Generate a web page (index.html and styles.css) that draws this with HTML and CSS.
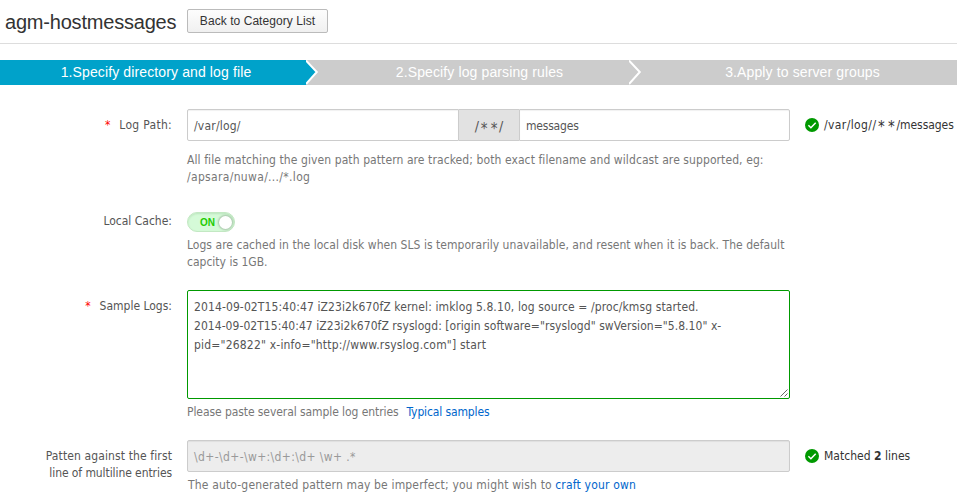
FILE: index.html
```html
<!DOCTYPE html>
<html lang="en">
<head>
<meta charset="utf-8">
<title>agm-hostmessages</title>
<link rel="stylesheet" href="styles.css">
</head>
<body>
<header class="header">
  <h1 class="title">agm-hostmessages</h1>
  <button class="back" type="button">Back to Category List</button>
</header>

<ol class="steps">
  <li class="step step-1 active">1.Specify directory and log file
    <svg class="chevron" width="13" height="25" viewBox="0 0 13 25"><path class="chevron-fill" d="M0 0 11 12 0 25Z"/><path class="chevron-line" d="M0 .5 10.8 12 0 24"/></svg>
  </li>
  <li class="step step-2">2.Specify log parsing rules
    <svg class="chevron" width="13" height="25" viewBox="0 0 13 25"><path class="chevron-line" d="M0 .5 10.8 12 0 24"/></svg>
  </li>
  <li class="step step-3">3.Apply to server groups</li>
</ol>

<main class="form">
  <section class="row row-path">
    <div class="label"><span class="required">*</span><span class="t-logpath">Log Path:</span></div>
    <div class="field">
      <div class="input-group">
        <div class="input input-dir">/var/log/</div>
        <div class="addon">/<span class="star">*</span><span class="star">*</span>/</div>
        <div class="input input-file">messages</div>
      </div>
      <p class="help help-path"><span class="t-help1">All file matching the given path pattern are tracked; both exact filename and wildcast are supported, eg:</span><br><span class="t-help2">/apsara/nuwa/.../*.log</span></p>
    </div>
    <div class="status">
      <svg class="tick" width="14" height="14" viewBox="0 0 14 14"><circle cx="7" cy="7" r="7"/><path d="M3.4 7.3 5.9 9.7 10.7 4.7"/></svg>
      <span class="t-path"><span class="t-root">/var/log//</span><span class="star">*</span><span class="star">*</span>/messages</span>
    </div>
  </section>

  <section class="row row-cache">
    <div class="label">Local Cache:</div>
    <div class="field">
      <div class="switch"><span class="switch-text">ON</span><span class="knob"></span></div>
      <p class="help help-cache"><span class="t-help3">Logs are cached in the local disk when SLS is temporarily unavailable, and resent when it is back. The default</span><br>capcity is 1GB.</p>
    </div>
  </section>

  <section class="row row-sample">
    <div class="label"><span class="required">*</span>Sample Logs:</div>
    <div class="field">
      <div class="textarea">
        <div class="t-log1">2014-09-02T15:40:47 iZ23i2k670fZ kernel: imklog 5.8.10, log source = /proc/kmsg started.</div>
        <div class="t-log2">2014-09-02T15:40:47 iZ23i2k670fZ rsyslogd: [origin software="rsyslogd" swVersion="5.8.10" x-</div>
        <div class="t-log3">pid="26822" x-info="http://www.rsyslog.com"] start</div>
        <svg class="grip" width="8" height="8" viewBox="0 0 8 8"><path d="M.5 7.5 7.5.5M4.5 7.5 7.5 4.5"/></svg>
      </div>
      <p class="help help-sample"><span class="t-help4">Please paste several sample log entries</span><a class="link link-samples">Typical samples</a></p>
    </div>
  </section>

  <section class="row row-pattern">
    <div class="label"><span class="t-label1">Patten against the first</span><br><span class="t-label2">line of multiline entries</span></div>
    <div class="field">
      <div class="input input-disabled">\d+-\d+-\w+:\d+:\d+ \w+ .*</div>
      <p class="help help-pattern"><span class="t-help5">The auto-generated pattern may be imperfect; you might wish to</span> <a class="link link-craft">craft your own</a></p>
    </div>
    <div class="status">
      <svg class="tick" width="14" height="14" viewBox="0 0 14 14"><circle cx="7" cy="7" r="7"/><path d="M3.4 7.3 5.9 9.7 10.7 4.7"/></svg>
      <span class="t-matched">Matched <b>2</b> lines</span>
    </div>
  </section>
</main>
</body>
</html>
```
FILE: styles.css
```css
* {
  box-sizing: border-box;
}

body {
  margin: 0;
  height: 502px;
  overflow: hidden;
  background: #fff;
  color: #555;
  font: 12px/17px "DejaVu Sans Condensed", "DejaVu Sans", sans-serif;
  white-space: nowrap;
}

.header {
  display: flex;
  align-items: flex-start;
  height: 44px;
  padding: 9px 0 0 5px;
  border-bottom: 1px solid #ddd;
}

.title {
  width: 182px;
  margin: 0;
  color: #333;
  font: 20px/26px "Liberation Sans", Arial, sans-serif;
  letter-spacing: -0.2px;
}

.back {
  width: 141px;
  height: 24px;
  padding: 0;
  border: 1px solid #bbb;
  border-radius: 2px;
  background: linear-gradient(#fdfdfd, #f0f0f0);
  color: #333;
  font: 12px/22px "Liberation Sans", Arial, sans-serif;
  letter-spacing: 0.06px;
}

.steps {
  display: grid;
  grid-template-columns: 306px 323px 1fr;
  height: 25px;
  margin: 16px 0 0;
  padding: 0;
  list-style: none;
  background: #ccc;
  color: #fff;
  font: 14px/25px "Liberation Sans", Arial, sans-serif;
  letter-spacing: 0.12px;
}

.step {
  position: relative;
  text-align: center;
}

.step-1 { padding-left: 6px; }
.step-2 { padding-left: 24px; }
.step-3 { padding-left: 19px; }

.active {
  background: #00a2ca;
}

.chevron {
  position: absolute;
  top: 0;
  left: 100%;
}

.chevron-fill { fill: #00a2ca; }

.chevron-line {
  fill: none;
  stroke: #fff;
  stroke-width: 2;
}

.form {
  padding-top: 24px;
}

.row {
  display: grid;
  grid-template-columns: 172px 603px 1fr;
  column-gap: 15px;
}

.row-path { height: 103px; }
.row-cache { height: 78px; }
.row-sample { height: 150px; }

.label {
  padding-top: 8px;
  text-align: right;
}

.row-cache .label { padding-top: 1px; }

.required {
  margin-right: 9px;
  color: #f00;
}

.input-group {
  display: flex;
}

.input {
  height: 32px;
  padding: 0 6px;
  border: 1px solid #ccc;
  border-radius: 2px;
  background: #fff;
  box-shadow: inset 0 1px 1px rgba(0, 0, 0, 0.06);
  line-height: 32px;
}

.input-dir {
  width: 272px;
  border-radius: 2px 0 0 2px;
  letter-spacing: 0.2px;
}

.addon {
  width: 60px;
  height: 32px;
  border: solid #ccc;
  border-width: 1px 0;
  background: #e2e2e2;
  font-size: 14px;
  line-height: 33px;
  text-align: center;
}

.star {
  position: relative;
  top: 3px;
  display: inline-block;
  width: 10px;
  font-size: 15px;
  line-height: 14px;
  text-align: center;
}

.input-file {
  width: 271px;
  border-radius: 0 2px 2px 0;
  letter-spacing: -0.2px;
}

.input-disabled {
  background: #ededed;
  color: #999;
  letter-spacing: 0.38px;
}

.help {
  margin: 0;
  color: #777;
}

.help-path { padding-top: 11px; }
.help-cache { padding-top: 5px; }
.help-sample { padding-top: 5px; }
.help-pattern { padding: 5px 0 0 1px; }

.status {
  display: flex;
  height: 32px;
  align-items: center;
  gap: 5px;
  color: #333;
}

.tick {
  flex: none;
  fill: #090;
}

.tick path {
  fill: none;
  stroke: #fff;
  stroke-width: 1.5;
}

.switch {
  display: flex;
  align-items: center;
  width: 48px;
  height: 20px;
  padding: 0 2px 0 12px;
  border: 1px solid #c3e8c3;
  border-radius: 10px;
  background: #d5fad8;
  box-shadow: inset 0 1px 2px rgba(0, 80, 0, 0.12);
}

.switch-text {
  width: 18px;
  padding-top: 2px;
  color: #2c0;
  font: bold 10px/18px "Liberation Sans", Arial, sans-serif;
}

.knob {
  width: 13px;
  height: 13px;
  margin-left: 1px;
  border-radius: 50%;
  background: #fff;
  box-shadow: 0 0 2px 1px rgba(0, 0, 0, 0.22);
}

.textarea {
  position: relative;
  height: 109px;
  padding: 7px 6px;
  border: 1px solid #090;
  border-radius: 2px;
  line-height: 19px;
}

.grip {
  position: absolute;
  right: 1px;
  bottom: 1px;
  fill: none;
  stroke: #666;
}

.link {
  color: #06c;
}

.link-samples {
  margin-left: 8px;
  letter-spacing: -0.13px;
}

.link-craft { letter-spacing: 0.18px; }

.t-logpath { letter-spacing: 0.3px; }
.t-root { letter-spacing: 0.4px; }
.t-path { letter-spacing: -0.05px; }
.t-help1 { letter-spacing: 0.088px; }
.t-help2 { letter-spacing: 0.33px; }
.t-help3 { letter-spacing: 0.036px; }
.t-help4 { letter-spacing: -0.08px; }
.t-help5 { letter-spacing: 0.16px; }
.t-log1 { letter-spacing: 0.11px; }
.t-log2 { letter-spacing: 0.05px; }
.t-log3 { letter-spacing: 0.19px; }
.t-label1 { letter-spacing: 0.12px; }
.t-label2 { letter-spacing: -0.08px; }
.t-matched { letter-spacing: 0.02px; }
```
